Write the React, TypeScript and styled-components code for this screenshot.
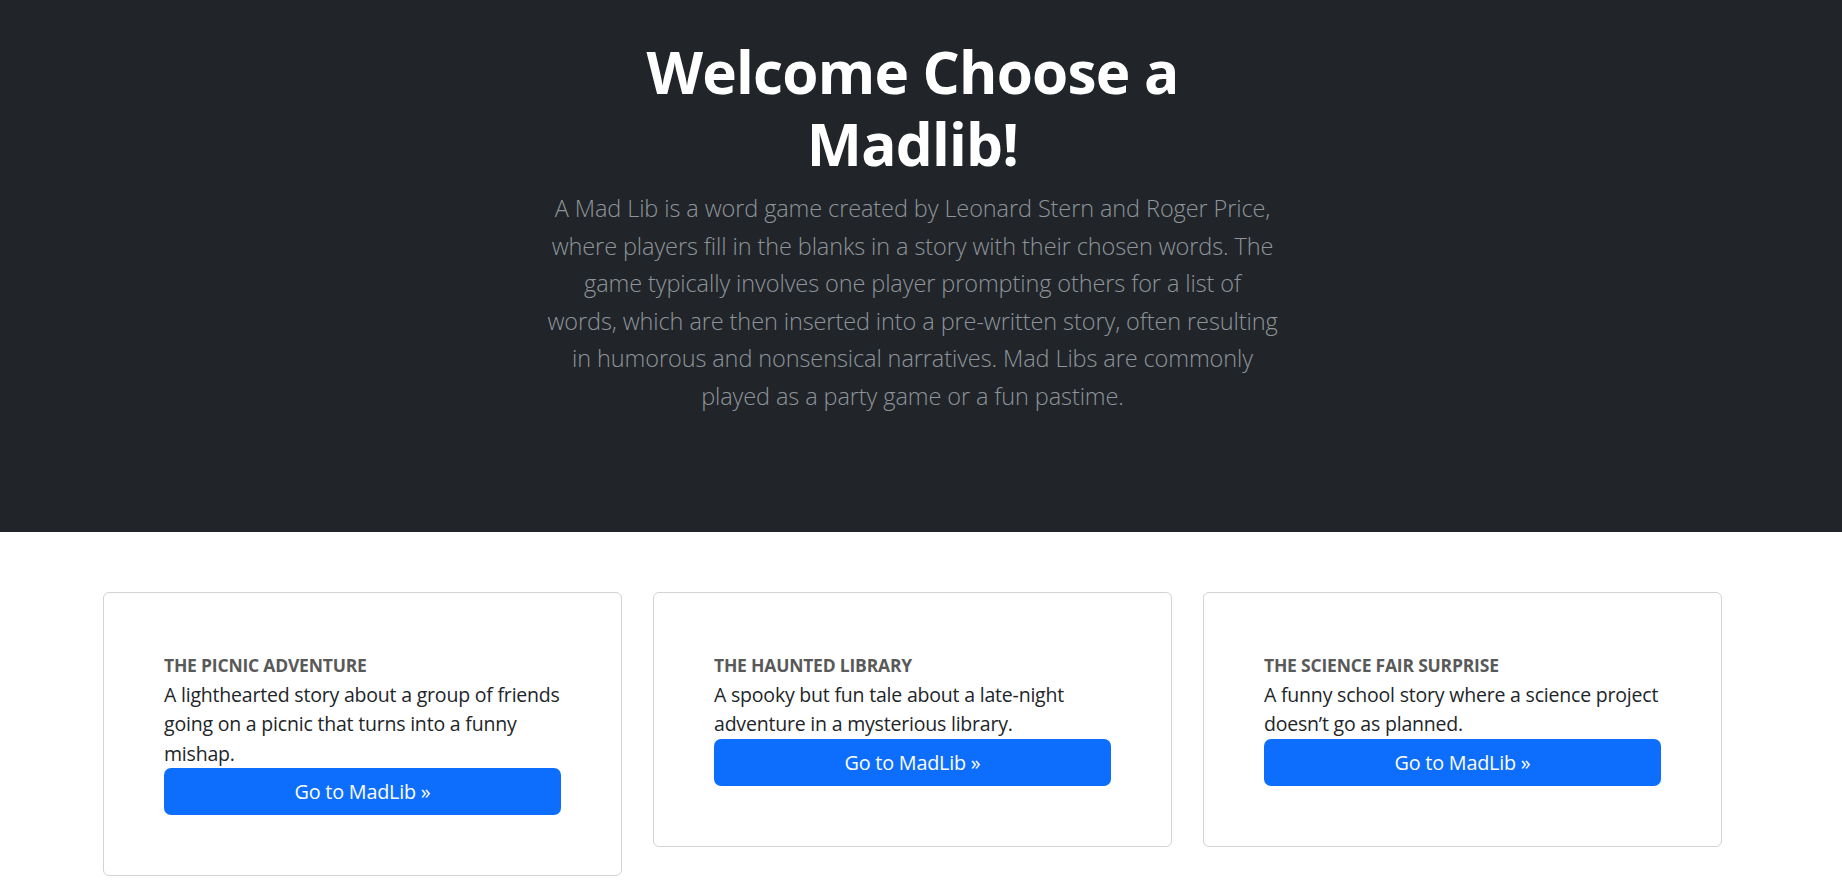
import React from "react";
import styled, { createGlobalStyle } from "styled-components";

const GlobalStyle = createGlobalStyle`
  html, body {
    margin: 0;
    padding: 0;
    background: #ffffff;
  }
  body {
    font-family: "Open Sans", "Noto Sans", "Liberation Sans", sans-serif;
    color: #212529;
  }
  * { box-sizing: border-box; }
`;

const Hero = styled.header`
  background: #212529;
  height: 532px;
  padding: 35px 17px 0 0;
  display: flex;
  justify-content: center;
`;

const HeroInner = styled.div`
  width: 780px;
  text-align: center;
`;

const Title = styled.h1`
  margin: 0 auto 11px;
  width: 640px;
  font-size: 58.5px;
  line-height: 72px;
  font-weight: 700;
  letter-spacing: -0.8px;
  color: #ffffff;
`;

const Lead = styled.p`
  margin: 0;
  font-size: 23.5px;
  line-height: 37.5px;
  font-weight: 300;
  letter-spacing: -0.1px;
  color: #8e949a;
`;

const Cards = styled.section`
  display: grid;
  grid-template-columns: repeat(3, 519px);
  column-gap: 31px;
  justify-content: center;
  align-items: start;
  padding: 60px 17px 40px 0;
`;

const Card = styled.article`
  border: 1px solid #d3d3d3;
  border-radius: 6px;
  padding: 58px 60px 60px;
  background: #fff;
`;

const CardTitle = styled.h5`
  margin: 0;
  font-size: 17.5px;
  line-height: 29px;
  font-weight: 700;
  text-transform: uppercase;
  color: #595959;
  letter-spacing: -0.2px;
`;

const CardText = styled.p`
  margin: 0;
  font-size: 19.5px;
  line-height: 29.4px;
  font-weight: 400;
  letter-spacing: -0.2px;
  color: #212529;
`;

const GoButton = styled.a`
  display: flex;
  align-items: center;
  justify-content: center;
  width: 100%;
  height: 47px;
  background: #0d6efd;
  color: #ffffff;
  border-radius: 7px;
  font-size: 19.8px;
  text-decoration: none;
  letter-spacing: -0.2px;
`;

const leadLines = [
  "A Mad Lib is a word game created by Leonard Stern and Roger Price,",
  "where players fill in the blanks in a story with their chosen words. The",
  "game typically involves one player prompting others for a list of",
  "words, which are then inserted into a pre-written story, often resulting",
  "in humorous and nonsensical narratives. Mad Libs are commonly",
  "played as a party game or a fun pastime.",
];

const stories = [
  {
    title: "The Picnic Adventure",
    text: "A lighthearted story about a group of friends going on a picnic that turns into a funny mishap.",
  },
  {
    title: "The Haunted Library",
    text: "A spooky but fun tale about a late-night adventure in a mysterious library.",
  },
  {
    title: "The Science Fair Surprise",
    text: "A funny school story where a science project doesn\u2019t go as planned.",
  },
];

export default function App() {
  return (
    <>
      <GlobalStyle />
      <Hero>
        <HeroInner>
          <Title>Welcome Choose a Madlib!</Title>
          <Lead>
            {leadLines.map((line, i) => (
              <React.Fragment key={i}>
                {line}
                {i < leadLines.length - 1 && <br />}
              </React.Fragment>
            ))}
          </Lead>
        </HeroInner>
      </Hero>
      <Cards>
        {stories.map((s) => (
          <Card key={s.title}>
            <CardTitle>{s.title}</CardTitle>
            <CardText>{s.text}</CardText>
            <GoButton href="#">Go to MadLib &raquo;</GoButton>
          </Card>
        ))}
      </Cards>
    </>
  );
}
